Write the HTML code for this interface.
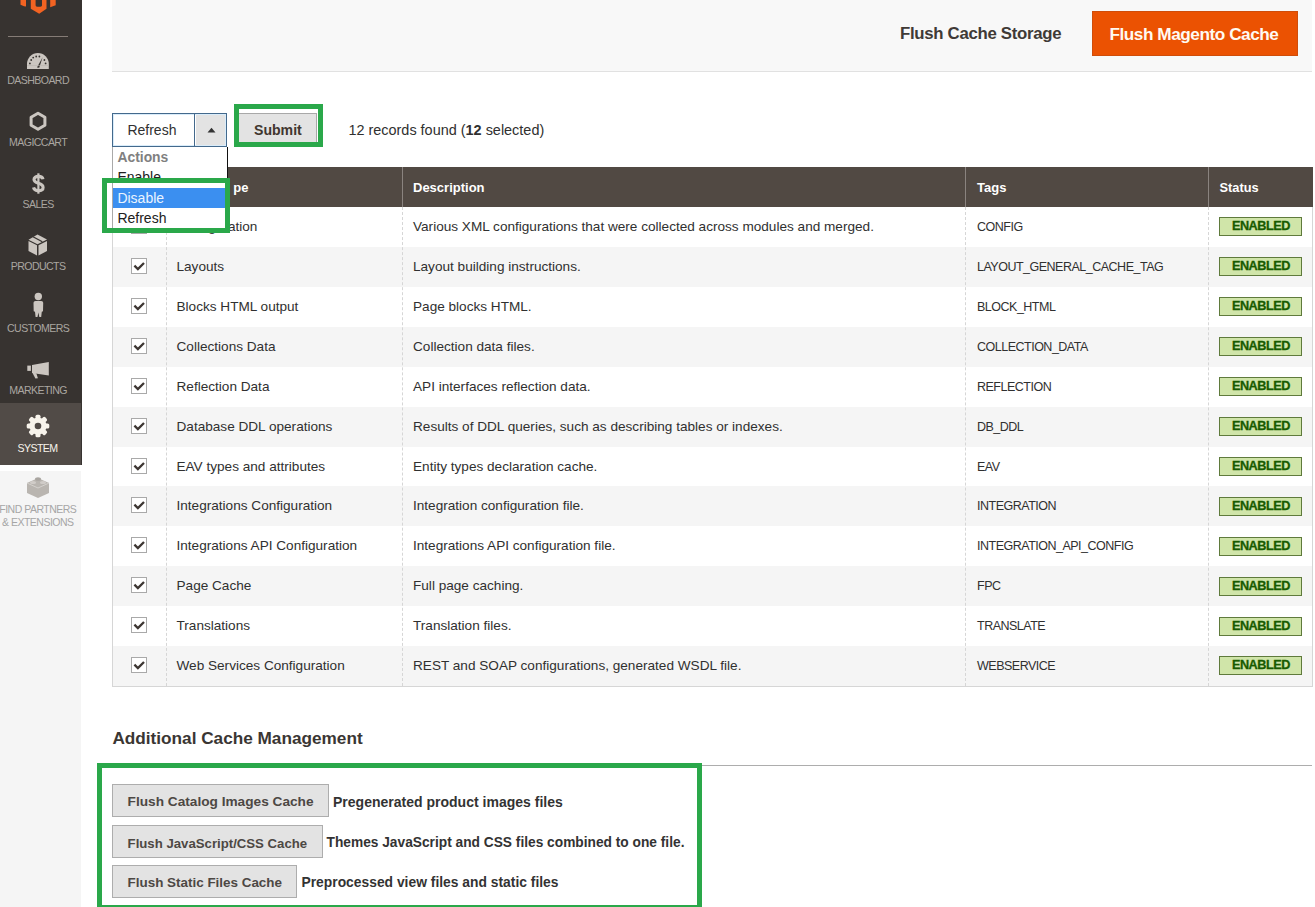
<!DOCTYPE html>
<html><head><meta charset="utf-8"><style>
html,body{margin:0;padding:0;}
body{width:1315px;height:907px;overflow:hidden;position:relative;background:#fff;font-family:"Liberation Sans", sans-serif;}
.t{position:absolute;white-space:pre;}
.r{position:absolute;}
</style></head><body>
<div class="r" style="left:0px;top:0px;width:82px;height:465px;background:#373330;"></div>
<div class="r" style="left:0px;top:403px;width:81px;height:62px;background:#514b47;"></div>
<div class="r" style="left:0px;top:471px;width:81px;height:436px;background:#f5f5f5;"></div>
<svg class="r" style="left:0;top:0" width="82" height="16" viewBox="0 0 82 16">
<path d="M20.5 0H26V6.6L24 6.2L20.5 4.8Z" fill="#f26322"/>
<path d="M30.8 0H46.5V8.7L39.2 13.7L30.8 8.7Z" fill="#f26322"/>
<path d="M35.6 0H42V5.2Q42 6.8 38.8 6.8Q35.6 6.8 35.6 5.2Z" fill="#373330"/>
<path d="M50.2 0H55.7V5.2L50.2 7.3Z" fill="#f26322"/>
</svg>
<div class="r" style="left:8px;top:36px;width:60px;height:1px;background:#857c76;"></div>
<svg class="r" style="left:27px;top:52.8px" width="22" height="16" viewBox="0 0 22 16">
<path d="M0 16 V10.9 A10.9 10.9 0 0 1 21.8 10.9 V16 Z" fill="#cbc6c0"/>
<path d="M10 14.5 L15.6 4.2 L12.2 14.8 Z" fill="#373330"/>
<g fill="#373330"><circle cx="2.9" cy="10.4" r="0.9"/><circle cx="4.2" cy="7" r="0.9"/><circle cx="6.2" cy="4.6" r="0.9"/><circle cx="9.2" cy="3.5" r="0.9"/><circle cx="12.4" cy="3.5" r="0.9"/><circle cx="17.4" cy="7" r="0.9"/><circle cx="18.6" cy="10.4" r="0.9"/></g>
<rect x="0" y="12.2" width="21.8" height="0.6" fill="#b9b4ae"/>
</svg>
<svg class="r" style="left:28px;top:111px" width="20" height="21" viewBox="0 0 20 21">
<path d="M10 2.2 L16.9 6.2 V14.2 L10 18.2 L3.1 14.2 V6.2Z" fill="none" stroke="#cbc6c0" stroke-width="3" stroke-linejoin="round"/>
</svg>
<svg class="r" style="left:31.5px;top:173px" width="13" height="21" viewBox="0 0 13 21">
<path d="M11 6.2 C10.6 4.2 8.8 3.4 6.4 3.4 C3.6 3.4 2 4.8 2 6.6 C2 8.8 4.2 9.6 6.4 10.3 C9 11.1 11.1 12 11.1 14.5 C11.1 16.6 9.2 17.7 6.4 17.7 C3.7 17.7 2 16.7 1.5 14.4" fill="none" stroke="#cbc6c0" stroke-width="3.1"/>
<path d="M6.4 0.3 V20.7" stroke="#cbc6c0" stroke-width="2.2"/>
</svg>
<svg class="r" style="left:28px;top:234px" width="20" height="22" viewBox="0 0 20 22">
<path d="M9.5 0.5 L19 5.5 L9.5 10.2 L0.5 5.8Z" fill="#cbc6c0"/>
<path d="M0.5 7 L9 11.2 V21.5 L0.5 17Z" fill="#cbc6c0"/>
<path d="M19 7 L10.5 11.2 V21.5 L19 17Z" fill="#cbc6c0"/>
<path d="M5 2.8 L14.3 7.8" stroke="#373330" stroke-width="1.3"/>
</svg>
<svg class="r" style="left:32px;top:292px" width="13" height="26" viewBox="0 0 13 26">
<circle cx="6.3" cy="4.5" r="3.7" fill="#cbc6c0"/>
<path d="M1.5 10.8 Q1.5 8.9 3.5 8.9 H9.2 Q11.2 8.9 11.2 10.8 L11 19.3 L9.8 19.8 L9.2 25 H7.3 L6.4 20.5 L5.5 25 H3.6 L3 19.8 L1.7 19.3 Z" fill="#cbc6c0"/>
</svg>
<svg class="r" style="left:26px;top:360px" width="24" height="20" viewBox="0 0 24 20">
<path d="M6 5 L22.8 2 V15.5 L6 12.9 Z" fill="#cbc6c0"/>
<rect x="1.3" y="5.6" width="3.6" height="5.3" fill="#cbc6c0"/>
<path d="M6.3 12.6 L10.3 13.3 L11.9 18.2 L9.4 18.6 Z" fill="#cbc6c0"/>
</svg>
<svg class="r" style="left:25.7px;top:414.2px" width="24" height="24" viewBox="0 0 24 24">
<g fill="#f7f3eb"><circle cx="12" cy="12" r="8.6"/><rect x="9.5" y="0.7" width="5" height="7" rx="1.6" transform="rotate(0 12 12)"/><rect x="9.5" y="0.7" width="5" height="7" rx="1.6" transform="rotate(45 12 12)"/><rect x="9.5" y="0.7" width="5" height="7" rx="1.6" transform="rotate(90 12 12)"/><rect x="9.5" y="0.7" width="5" height="7" rx="1.6" transform="rotate(135 12 12)"/><rect x="9.5" y="0.7" width="5" height="7" rx="1.6" transform="rotate(180 12 12)"/><rect x="9.5" y="0.7" width="5" height="7" rx="1.6" transform="rotate(225 12 12)"/><rect x="9.5" y="0.7" width="5" height="7" rx="1.6" transform="rotate(270 12 12)"/><rect x="9.5" y="0.7" width="5" height="7" rx="1.6" transform="rotate(315 12 12)"/></g>
<circle cx="12" cy="12" r="3.3" fill="#514b47"/>
</svg>
<svg class="r" style="left:26px;top:475px" width="24" height="24" viewBox="0 0 24 24">
<path d="M12 3 L23 8 V18 L12 23 L1 18 V8Z" fill="#b9b5b0"/>
<path d="M1 8 L12 13 L23 8" fill="none" stroke="#d4d1cd" stroke-width="1"/>
<ellipse cx="12" cy="4" rx="3" ry="1.8" fill="#a9a5a0"/>
<ellipse cx="7" cy="7.5" rx="3" ry="1.6" fill="#d0ccc8"/>
<ellipse cx="17" cy="7.5" rx="3" ry="1.6" fill="#d0ccc8"/>
</svg>
<div class="t" style="left:-3.90px;width:84px;text-align:center;top:75.03px;font-size:10.6px;line-height:10.6px;color:#aaa6a0;font-weight:400;letter-spacing:-0.6px;">DASHBOARD</div>
<div class="t" style="left:-3.90px;width:84px;text-align:center;top:137.03px;font-size:10.6px;line-height:10.6px;color:#aaa6a0;font-weight:400;letter-spacing:-0.6px;">MAGICCART</div>
<div class="t" style="left:-3.90px;width:84px;text-align:center;top:199.03px;font-size:10.6px;line-height:10.6px;color:#aaa6a0;font-weight:400;letter-spacing:-0.6px;">SALES</div>
<div class="t" style="left:-3.90px;width:84px;text-align:center;top:261.33px;font-size:10.6px;line-height:10.6px;color:#aaa6a0;font-weight:400;letter-spacing:-0.6px;">PRODUCTS</div>
<div class="t" style="left:-3.90px;width:84px;text-align:center;top:323.23px;font-size:10.6px;line-height:10.6px;color:#aaa6a0;font-weight:400;letter-spacing:-0.6px;">CUSTOMERS</div>
<div class="t" style="left:-3.90px;width:84px;text-align:center;top:385.23px;font-size:10.6px;line-height:10.6px;color:#aaa6a0;font-weight:400;letter-spacing:-0.6px;">MARKETING</div>
<div class="t" style="left:-4.50px;width:84px;text-align:center;top:442.53px;font-size:10.6px;line-height:10.6px;color:#f7f3eb;font-weight:400;letter-spacing:-0.6px;">SYSTEM</div>
<div class="t" style="left:-7.20px;width:90px;text-align:center;top:503.61px;font-size:10.5px;line-height:10.5px;color:#a6a6a6;font-weight:400;letter-spacing:-0.5px;">FIND PARTNERS</div>
<div class="t" style="left:-7.20px;width:90px;text-align:center;top:516.91px;font-size:10.5px;line-height:10.5px;color:#a6a6a6;font-weight:400;letter-spacing:-0.5px;">&amp; EXTENSIONS</div>
<div class="r" style="left:112px;top:0px;width:1200px;height:71px;background:#f8f8f8;"></div>
<div class="r" style="left:112px;top:71px;width:1200px;height:1px;background:#e1e1e1;"></div>
<div class="t" style="left:900.00px;top:26.28px;font-size:16.8px;line-height:16.8px;color:#3f3a36;font-weight:700;letter-spacing:-0.3px;">Flush Cache Storage</div>
<div class="r" style="left:1092px;top:11px;width:204px;height:43px;background:#eb5202;border:1px solid #cf4d0a"></div>
<div class="t" style="left:1109.40px;top:25.64px;font-size:17.2px;line-height:17.2px;color:#fffaf2;font-weight:700;letter-spacing:-0.45px;">Flush Magento Cache</div>
<div class="r" style="left:112px;top:167px;width:1201px;height:40px;background:#514943;"></div>
<div class="r" style="left:166px;top:167px;width:1px;height:40px;background:#8a837f;"></div>
<div class="r" style="left:402px;top:167px;width:1px;height:40px;background:#8a837f;"></div>
<div class="r" style="left:965px;top:167px;width:1px;height:40px;background:#8a837f;"></div>
<div class="r" style="left:1208px;top:167px;width:1px;height:40px;background:#8a837f;"></div>
<div class="t" style="left:176.50px;top:181.00px;font-size:13px;line-height:13px;color:#ffffff;font-weight:700;">Cache T<span style="color:#514943">y</span>pe</div>
<div class="t" style="left:413.00px;top:181.00px;font-size:13px;line-height:13px;color:#ffffff;font-weight:700;">Description</div>
<div class="t" style="left:977.00px;top:181.00px;font-size:13px;line-height:13px;color:#ffffff;font-weight:700;">Tags</div>
<div class="t" style="left:1219.50px;top:181.76px;font-size:12.8px;line-height:12.8px;color:#ffffff;font-weight:700;">Status</div>
<div class="t" style="left:176.50px;top:220.09px;font-size:13.6px;line-height:13.6px;color:#303030;font-weight:400;">Configuration</div>
<div class="t" style="left:413.00px;top:220.09px;font-size:13.6px;line-height:13.6px;color:#303030;font-weight:400;">Various XML configurations that were collected across modules and merged.</div>
<div class="t" style="left:977.00px;top:221.02px;font-size:12.5px;line-height:12.5px;color:#303030;font-weight:400;letter-spacing:-0.5px;">CONFIG</div>
<svg class="r" style="left:131px;top:217.5px" width="16" height="16" viewBox="0 0 16 16">
<rect x="0.5" y="0.5" width="15" height="15" fill="#fff" stroke="#a9a9a9"/>
<path d="M3.4 7.6 L6.9 11.1 L13 5" fill="none" stroke="#3d3632" stroke-width="2.3"/>
</svg>
<div class="r" style="left:1219px;top:217px;width:81px;height:17px;background:#d0e5a9;border:1px solid #5f7a3c;"></div>
<div class="t" style="left:1232.00px;top:219.85px;font-size:12.7px;line-height:12.7px;color:#185b00;font-weight:700;letter-spacing:-0.5px;-webkit-text-stroke:0.3px #185b00;">ENABLED</div>
<div class="r" style="left:112px;top:247px;width:1201px;height:40px;background:#f5f5f5;"></div>
<div class="t" style="left:176.50px;top:260.09px;font-size:13.6px;line-height:13.6px;color:#303030;font-weight:400;">Layouts</div>
<div class="t" style="left:413.00px;top:260.09px;font-size:13.6px;line-height:13.6px;color:#303030;font-weight:400;">Layout building instructions.</div>
<div class="t" style="left:977.00px;top:261.02px;font-size:12.5px;line-height:12.5px;color:#303030;font-weight:400;letter-spacing:-0.5px;">LAYOUT_GENERAL_CACHE_TAG</div>
<svg class="r" style="left:131px;top:257.5px" width="16" height="16" viewBox="0 0 16 16">
<rect x="0.5" y="0.5" width="15" height="15" fill="#fff" stroke="#a9a9a9"/>
<path d="M3.4 7.6 L6.9 11.1 L13 5" fill="none" stroke="#3d3632" stroke-width="2.3"/>
</svg>
<div class="r" style="left:1219px;top:257px;width:81px;height:17px;background:#d0e5a9;border:1px solid #5f7a3c;"></div>
<div class="t" style="left:1232.00px;top:259.85px;font-size:12.7px;line-height:12.7px;color:#185b00;font-weight:700;letter-spacing:-0.5px;-webkit-text-stroke:0.3px #185b00;">ENABLED</div>
<div class="t" style="left:176.50px;top:300.09px;font-size:13.6px;line-height:13.6px;color:#303030;font-weight:400;">Blocks HTML output</div>
<div class="t" style="left:413.00px;top:300.09px;font-size:13.6px;line-height:13.6px;color:#303030;font-weight:400;">Page blocks HTML.</div>
<div class="t" style="left:977.00px;top:301.02px;font-size:12.5px;line-height:12.5px;color:#303030;font-weight:400;letter-spacing:-0.5px;">BLOCK_HTML</div>
<svg class="r" style="left:131px;top:297.5px" width="16" height="16" viewBox="0 0 16 16">
<rect x="0.5" y="0.5" width="15" height="15" fill="#fff" stroke="#a9a9a9"/>
<path d="M3.4 7.6 L6.9 11.1 L13 5" fill="none" stroke="#3d3632" stroke-width="2.3"/>
</svg>
<div class="r" style="left:1219px;top:297px;width:81px;height:17px;background:#d0e5a9;border:1px solid #5f7a3c;"></div>
<div class="t" style="left:1232.00px;top:299.85px;font-size:12.7px;line-height:12.7px;color:#185b00;font-weight:700;letter-spacing:-0.5px;-webkit-text-stroke:0.3px #185b00;">ENABLED</div>
<div class="r" style="left:112px;top:327px;width:1201px;height:40px;background:#f5f5f5;"></div>
<div class="t" style="left:176.50px;top:340.09px;font-size:13.6px;line-height:13.6px;color:#303030;font-weight:400;">Collections Data</div>
<div class="t" style="left:413.00px;top:340.09px;font-size:13.6px;line-height:13.6px;color:#303030;font-weight:400;">Collection data files.</div>
<div class="t" style="left:977.00px;top:341.02px;font-size:12.5px;line-height:12.5px;color:#303030;font-weight:400;letter-spacing:-0.5px;">COLLECTION_DATA</div>
<svg class="r" style="left:131px;top:337.5px" width="16" height="16" viewBox="0 0 16 16">
<rect x="0.5" y="0.5" width="15" height="15" fill="#fff" stroke="#a9a9a9"/>
<path d="M3.4 7.6 L6.9 11.1 L13 5" fill="none" stroke="#3d3632" stroke-width="2.3"/>
</svg>
<div class="r" style="left:1219px;top:337px;width:81px;height:17px;background:#d0e5a9;border:1px solid #5f7a3c;"></div>
<div class="t" style="left:1232.00px;top:339.85px;font-size:12.7px;line-height:12.7px;color:#185b00;font-weight:700;letter-spacing:-0.5px;-webkit-text-stroke:0.3px #185b00;">ENABLED</div>
<div class="t" style="left:176.50px;top:380.09px;font-size:13.6px;line-height:13.6px;color:#303030;font-weight:400;">Reflection Data</div>
<div class="t" style="left:413.00px;top:380.09px;font-size:13.6px;line-height:13.6px;color:#303030;font-weight:400;">API interfaces reflection data.</div>
<div class="t" style="left:977.00px;top:381.02px;font-size:12.5px;line-height:12.5px;color:#303030;font-weight:400;letter-spacing:-0.5px;">REFLECTION</div>
<svg class="r" style="left:131px;top:377.5px" width="16" height="16" viewBox="0 0 16 16">
<rect x="0.5" y="0.5" width="15" height="15" fill="#fff" stroke="#a9a9a9"/>
<path d="M3.4 7.6 L6.9 11.1 L13 5" fill="none" stroke="#3d3632" stroke-width="2.3"/>
</svg>
<div class="r" style="left:1219px;top:377px;width:81px;height:17px;background:#d0e5a9;border:1px solid #5f7a3c;"></div>
<div class="t" style="left:1232.00px;top:379.85px;font-size:12.7px;line-height:12.7px;color:#185b00;font-weight:700;letter-spacing:-0.5px;-webkit-text-stroke:0.3px #185b00;">ENABLED</div>
<div class="r" style="left:112px;top:407px;width:1201px;height:40px;background:#f5f5f5;"></div>
<div class="t" style="left:176.50px;top:420.09px;font-size:13.6px;line-height:13.6px;color:#303030;font-weight:400;">Database DDL operations</div>
<div class="t" style="left:413.00px;top:420.09px;font-size:13.6px;line-height:13.6px;color:#303030;font-weight:400;">Results of DDL queries, such as describing tables or indexes.</div>
<div class="t" style="left:977.00px;top:421.02px;font-size:12.5px;line-height:12.5px;color:#303030;font-weight:400;letter-spacing:-0.5px;">DB_DDL</div>
<svg class="r" style="left:131px;top:417.5px" width="16" height="16" viewBox="0 0 16 16">
<rect x="0.5" y="0.5" width="15" height="15" fill="#fff" stroke="#a9a9a9"/>
<path d="M3.4 7.6 L6.9 11.1 L13 5" fill="none" stroke="#3d3632" stroke-width="2.3"/>
</svg>
<div class="r" style="left:1219px;top:417px;width:81px;height:17px;background:#d0e5a9;border:1px solid #5f7a3c;"></div>
<div class="t" style="left:1232.00px;top:419.85px;font-size:12.7px;line-height:12.7px;color:#185b00;font-weight:700;letter-spacing:-0.5px;-webkit-text-stroke:0.3px #185b00;">ENABLED</div>
<div class="t" style="left:176.50px;top:460.09px;font-size:13.6px;line-height:13.6px;color:#303030;font-weight:400;">EAV types and attributes</div>
<div class="t" style="left:413.00px;top:460.09px;font-size:13.6px;line-height:13.6px;color:#303030;font-weight:400;">Entity types declaration cache.</div>
<div class="t" style="left:977.00px;top:461.02px;font-size:12.5px;line-height:12.5px;color:#303030;font-weight:400;letter-spacing:-0.5px;">EAV</div>
<svg class="r" style="left:131px;top:457.5px" width="16" height="16" viewBox="0 0 16 16">
<rect x="0.5" y="0.5" width="15" height="15" fill="#fff" stroke="#a9a9a9"/>
<path d="M3.4 7.6 L6.9 11.1 L13 5" fill="none" stroke="#3d3632" stroke-width="2.3"/>
</svg>
<div class="r" style="left:1219px;top:457px;width:81px;height:17px;background:#d0e5a9;border:1px solid #5f7a3c;"></div>
<div class="t" style="left:1232.00px;top:459.85px;font-size:12.7px;line-height:12.7px;color:#185b00;font-weight:700;letter-spacing:-0.5px;-webkit-text-stroke:0.3px #185b00;">ENABLED</div>
<div class="r" style="left:112px;top:486px;width:1201px;height:40px;background:#f5f5f5;"></div>
<div class="t" style="left:176.50px;top:499.09px;font-size:13.6px;line-height:13.6px;color:#303030;font-weight:400;">Integrations Configuration</div>
<div class="t" style="left:413.00px;top:499.09px;font-size:13.6px;line-height:13.6px;color:#303030;font-weight:400;">Integration configuration file.</div>
<div class="t" style="left:977.00px;top:500.02px;font-size:12.5px;line-height:12.5px;color:#303030;font-weight:400;letter-spacing:-0.5px;">INTEGRATION</div>
<svg class="r" style="left:131px;top:496.5px" width="16" height="16" viewBox="0 0 16 16">
<rect x="0.5" y="0.5" width="15" height="15" fill="#fff" stroke="#a9a9a9"/>
<path d="M3.4 7.6 L6.9 11.1 L13 5" fill="none" stroke="#3d3632" stroke-width="2.3"/>
</svg>
<div class="r" style="left:1219px;top:497px;width:81px;height:17px;background:#d0e5a9;border:1px solid #5f7a3c;"></div>
<div class="t" style="left:1232.00px;top:499.85px;font-size:12.7px;line-height:12.7px;color:#185b00;font-weight:700;letter-spacing:-0.5px;-webkit-text-stroke:0.3px #185b00;">ENABLED</div>
<div class="t" style="left:176.50px;top:539.09px;font-size:13.6px;line-height:13.6px;color:#303030;font-weight:400;">Integrations API Configuration</div>
<div class="t" style="left:413.00px;top:539.09px;font-size:13.6px;line-height:13.6px;color:#303030;font-weight:400;">Integrations API configuration file.</div>
<div class="t" style="left:977.00px;top:540.02px;font-size:12.5px;line-height:12.5px;color:#303030;font-weight:400;letter-spacing:-0.5px;">INTEGRATION_API_CONFIG</div>
<svg class="r" style="left:131px;top:536.5px" width="16" height="16" viewBox="0 0 16 16">
<rect x="0.5" y="0.5" width="15" height="15" fill="#fff" stroke="#a9a9a9"/>
<path d="M3.4 7.6 L6.9 11.1 L13 5" fill="none" stroke="#3d3632" stroke-width="2.3"/>
</svg>
<div class="r" style="left:1219px;top:537px;width:81px;height:17px;background:#d0e5a9;border:1px solid #5f7a3c;"></div>
<div class="t" style="left:1232.00px;top:539.85px;font-size:12.7px;line-height:12.7px;color:#185b00;font-weight:700;letter-spacing:-0.5px;-webkit-text-stroke:0.3px #185b00;">ENABLED</div>
<div class="r" style="left:112px;top:566px;width:1201px;height:40px;background:#f5f5f5;"></div>
<div class="t" style="left:176.50px;top:579.09px;font-size:13.6px;line-height:13.6px;color:#303030;font-weight:400;">Page Cache</div>
<div class="t" style="left:413.00px;top:579.09px;font-size:13.6px;line-height:13.6px;color:#303030;font-weight:400;">Full page caching.</div>
<div class="t" style="left:977.00px;top:580.02px;font-size:12.5px;line-height:12.5px;color:#303030;font-weight:400;letter-spacing:-0.5px;">FPC</div>
<svg class="r" style="left:131px;top:576.5px" width="16" height="16" viewBox="0 0 16 16">
<rect x="0.5" y="0.5" width="15" height="15" fill="#fff" stroke="#a9a9a9"/>
<path d="M3.4 7.6 L6.9 11.1 L13 5" fill="none" stroke="#3d3632" stroke-width="2.3"/>
</svg>
<div class="r" style="left:1219px;top:577px;width:81px;height:17px;background:#d0e5a9;border:1px solid #5f7a3c;"></div>
<div class="t" style="left:1232.00px;top:579.85px;font-size:12.7px;line-height:12.7px;color:#185b00;font-weight:700;letter-spacing:-0.5px;-webkit-text-stroke:0.3px #185b00;">ENABLED</div>
<div class="t" style="left:176.50px;top:619.09px;font-size:13.6px;line-height:13.6px;color:#303030;font-weight:400;">Translations</div>
<div class="t" style="left:413.00px;top:619.09px;font-size:13.6px;line-height:13.6px;color:#303030;font-weight:400;">Translation files.</div>
<div class="t" style="left:977.00px;top:620.02px;font-size:12.5px;line-height:12.5px;color:#303030;font-weight:400;letter-spacing:-0.5px;">TRANSLATE</div>
<svg class="r" style="left:131px;top:616.5px" width="16" height="16" viewBox="0 0 16 16">
<rect x="0.5" y="0.5" width="15" height="15" fill="#fff" stroke="#a9a9a9"/>
<path d="M3.4 7.6 L6.9 11.1 L13 5" fill="none" stroke="#3d3632" stroke-width="2.3"/>
</svg>
<div class="r" style="left:1219px;top:617px;width:81px;height:17px;background:#d0e5a9;border:1px solid #5f7a3c;"></div>
<div class="t" style="left:1232.00px;top:619.85px;font-size:12.7px;line-height:12.7px;color:#185b00;font-weight:700;letter-spacing:-0.5px;-webkit-text-stroke:0.3px #185b00;">ENABLED</div>
<div class="r" style="left:112px;top:646px;width:1201px;height:40px;background:#f5f5f5;"></div>
<div class="t" style="left:176.50px;top:659.09px;font-size:13.6px;line-height:13.6px;color:#303030;font-weight:400;">Web Services Configuration</div>
<div class="t" style="left:413.00px;top:659.09px;font-size:13.6px;line-height:13.6px;color:#303030;font-weight:400;">REST and SOAP configurations, generated WSDL file.</div>
<div class="t" style="left:977.00px;top:660.02px;font-size:12.5px;line-height:12.5px;color:#303030;font-weight:400;letter-spacing:-0.5px;">WEBSERVICE</div>
<svg class="r" style="left:131px;top:656.5px" width="16" height="16" viewBox="0 0 16 16">
<rect x="0.5" y="0.5" width="15" height="15" fill="#fff" stroke="#a9a9a9"/>
<path d="M3.4 7.6 L6.9 11.1 L13 5" fill="none" stroke="#3d3632" stroke-width="2.3"/>
</svg>
<div class="r" style="left:1219px;top:656px;width:81px;height:17px;background:#d0e5a9;border:1px solid #5f7a3c;"></div>
<div class="t" style="left:1232.00px;top:658.85px;font-size:12.7px;line-height:12.7px;color:#185b00;font-weight:700;letter-spacing:-0.5px;-webkit-text-stroke:0.3px #185b00;">ENABLED</div>
<div class="r" style="left:166px;top:207px;width:0;height:479px;border-left:1px dashed #d6d6d6"></div>
<div class="r" style="left:402px;top:207px;width:0;height:479px;border-left:1px dashed #d6d6d6"></div>
<div class="r" style="left:965px;top:207px;width:0;height:479px;border-left:1px dashed #d6d6d6"></div>
<div class="r" style="left:1208px;top:207px;width:0;height:479px;border-left:1px dashed #d6d6d6"></div>
<div class="r" style="left:112px;top:207px;width:1px;height:480px;background:#d6d6d6;"></div>
<div class="r" style="left:1312px;top:207px;width:1px;height:480px;background:#d6d6d6;"></div>
<div class="r" style="left:112px;top:686px;width:1201px;height:1px;background:#d6d6d6;"></div>
<div class="r" style="left:112px;top:113px;width:113px;height:32px;background:#fff;border:1px solid #44698c;box-shadow:inset 0 0 0 1px #d9ecfa"></div>
<div class="r" style="left:196px;top:115px;width:29px;height:30px;background:#e3e3e3;"></div>
<div class="r" style="left:194px;top:114px;width:1px;height:32px;background:#44698c;"></div>
<svg class="r" style="left:207px;top:127px" width="9" height="6" viewBox="0 0 9 6"><path d="M0.5 5.5 L4.5 0.8 L8.5 5.5Z" fill="#333"/></svg>
<div class="t" style="left:127.40px;top:123.35px;font-size:14px;line-height:14px;color:#303030;font-weight:400;">Refresh</div>
<div class="r" style="left:239px;top:113px;width:77px;height:28px;background:#e3e3e3;border-top:1px solid #a8a8a8;border-right:1px solid #a8a8a8"></div>
<div class="t" style="left:254.00px;top:122.76px;font-size:14.1px;line-height:14.1px;color:#41362f;font-weight:700;">Submit</div>
<div class="t" style="left:348.40px;top:122.77px;font-size:14.45px;line-height:14.45px;color:#303030;font-weight:400;">12 records found (<b>12</b> selected)</div>
<div class="r" style="left:112px;top:147px;width:114px;height:84px;background:#fff;border-left:1px solid #a9a9a9;border-right:1px solid #111"></div>
<div class="t" style="left:117.40px;top:150.83px;font-size:13.9px;line-height:13.9px;color:#808080;font-weight:700;">Actions</div>
<div class="t" style="left:117.40px;top:170.15px;font-size:14px;line-height:14px;color:#202020;font-weight:400;">Enable</div>
<div class="r" style="left:113px;top:188px;width:113px;height:20px;background:#3b8ff0;"></div>
<div class="t" style="left:117.40px;top:190.65px;font-size:14px;line-height:14px;color:#eaf4ff;font-weight:400;">Disable</div>
<div class="t" style="left:117.40px;top:210.65px;font-size:14px;line-height:14px;color:#202020;font-weight:400;">Refresh</div>
<div class="t" style="left:112.40px;top:730.24px;font-size:17.2px;line-height:17.2px;color:#3a3633;font-weight:700;">Additional Cache Management</div>
<div class="r" style="left:112px;top:765px;width:1200px;height:1px;background:#adadad;"></div>
<div class="r" style="left:112px;top:784px;width:215px;height:31px;background:#e3e3e3;border:1px solid #adadad"></div>
<div class="t" style="left:127.60px;top:795.24px;font-size:13.66px;line-height:13.66px;color:#4d4844;font-weight:700;">Flush Catalog Images Cache</div>
<div class="t" style="left:333.00px;top:795.12px;font-size:14.03px;line-height:14.03px;color:#333333;font-weight:700;">Pregenerated product images files</div>
<div class="r" style="left:112px;top:825px;width:209px;height:31px;background:#e3e3e3;border:1px solid #adadad"></div>
<div class="t" style="left:127.60px;top:836.63px;font-size:13.2px;line-height:13.2px;color:#4d4844;font-weight:700;">Flush JavaScript/CSS Cache</div>
<div class="t" style="left:326.50px;top:836.37px;font-size:13.74px;line-height:13.74px;color:#333333;font-weight:700;">Themes JavaScript and CSS files combined to one file.</div>
<div class="r" style="left:112px;top:865px;width:183px;height:31px;background:#e3e3e3;border:1px solid #adadad"></div>
<div class="t" style="left:127.60px;top:876.43px;font-size:13.43px;line-height:13.43px;color:#4d4844;font-weight:700;">Flush Static Files Cache</div>
<div class="t" style="left:301.50px;top:876.28px;font-size:13.85px;line-height:13.85px;color:#333333;font-weight:700;">Preprocessed view files and static files</div>
<div class="r" style="left:234px;top:104px;width:78.80px;height:32.60px;border:5px solid #2aa84a"></div>
<div class="r" style="left:102.2px;top:178.2px;width:118.30px;height:44.50px;border:5px solid #2aa84a"></div>
<div class="r" style="left:97px;top:763px;width:595.00px;height:136.60px;border:5px solid #2aa84a"></div>
</body></html>
